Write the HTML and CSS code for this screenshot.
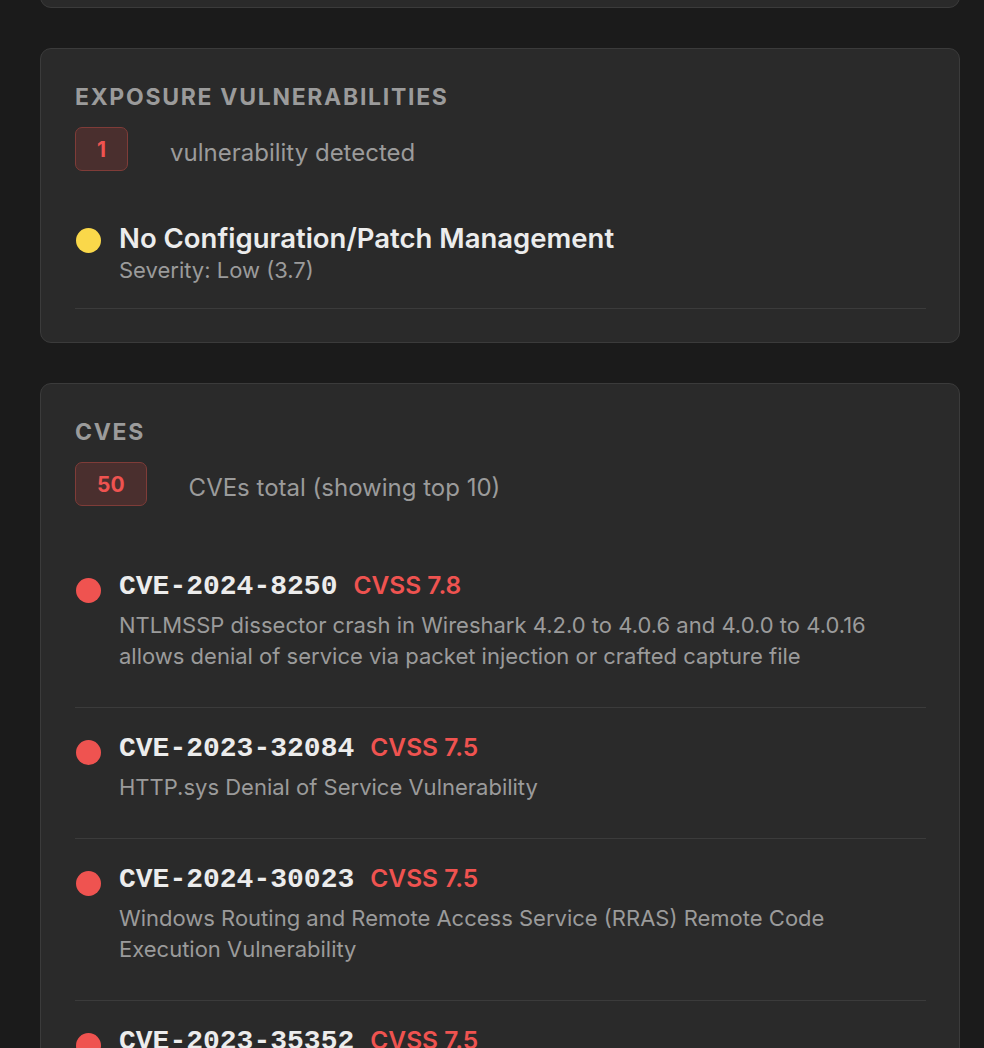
FILE: index.html
```html
<!DOCTYPE html>
<html lang="en">
<head>
<meta charset="utf-8">
<title>Vulnerabilities</title>
<link rel="stylesheet" href="styles.css">
</head>
<body>
<main class="page">
  <section class="card card-prev"></section>

  <section class="card">
    <h2 class="card-title">Exposure Vulnerabilities</h2>
    <div class="count-row">
      <span class="badge">1</span>
      <span class="count-text">vulnerability detected</span>
    </div>
    <ul class="list">
      <li class="item">
        <span class="dot dot-low"></span>
        <div class="item-body">
          <div class="item-title">No Configuration/Patch Management</div>
          <div class="item-sub">Severity: Low (3.7)</div>
        </div>
      </li>
    </ul>
  </section>

  <section class="card">
    <h2 class="card-title">CVEs</h2>
    <div class="count-row">
      <span class="badge">50</span>
      <span class="count-text">CVEs total (showing top 10)</span>
    </div>
    <ul class="list list-cve">
      <li class="item item-cve">
        <span class="dot dot-high"></span>
        <div class="item-body">
          <div class="cve-head"><span class="cve-id">CVE-2024-8250</span><span class="cvss">CVSS 7.8</span></div>
          <p class="cve-desc">NTLMSSP dissector crash in Wireshark 4.2.0 to 4.0.6 and 4.0.0 to 4.0.16 allows denial of service via packet injection or crafted capture file</p>
        </div>
      </li>
      <li class="item item-cve">
        <span class="dot dot-high"></span>
        <div class="item-body">
          <div class="cve-head"><span class="cve-id">CVE-2023-32084</span><span class="cvss">CVSS 7.5</span></div>
          <p class="cve-desc">HTTP.sys Denial of Service Vulnerability</p>
        </div>
      </li>
      <li class="item item-cve">
        <span class="dot dot-high"></span>
        <div class="item-body">
          <div class="cve-head"><span class="cve-id">CVE-2024-30023</span><span class="cvss">CVSS 7.5</span></div>
          <p class="cve-desc">Windows Routing and Remote Access Service (RRAS) Remote Code Execution Vulnerability</p>
        </div>
      </li>
      <li class="item item-cve">
        <span class="dot dot-high"></span>
        <div class="item-body">
          <div class="cve-head"><span class="cve-id">CVE-2023-35352</span><span class="cvss">CVSS 7.5</span></div>
          <p class="cve-desc">Windows Remote Desktop Security Feature Bypass Vulnerability</p>
        </div>
      </li>
    </ul>
  </section>
</main>
</body>
</html>
```

FILE: styles.css
```css
* { box-sizing: border-box; }

html, body {
  margin: 0;
  padding: 0;
  background: #1b1b1b;
  height: 100%;
  overflow: hidden;
}

body {
  font-family: Inter, "Noto Sans", "Liberation Sans", sans-serif;
  color: #e8e8e8;
}

.page {
  display: flex;
  flex-direction: column;
  gap: 40px;
  padding: 0 24px 0 40px;
}

.card {
  width: 920px;
  background: #2a2a2a;
  border: 1px solid #3b3b3b;
  border-radius: 11px;
  padding: 33px 33px 33px 34px;
}

.card-prev {
  height: 100px;
  margin-top: -92px;
  flex-shrink: 0;
}

.card-title {
  margin: 0;
  font-size: 23px;
  line-height: 30px;
  font-weight: 700;
  letter-spacing: 1.7px;
  text-transform: uppercase;
  color: #9b9b9b;
}

.count-row {
  display: flex;
  align-items: center;
  gap: 42px;
  margin-top: 15px;
}

.badge {
  display: inline-flex;
  align-items: center;
  justify-content: center;
  height: 44px;
  padding: 0 21px;
  background: #4a2f2e;
  border: 1.5px solid #7f3c38;
  border-radius: 7px;
  color: #ef5350;
  font-weight: 700;
  font-size: 21px;
}

.count-text {
  font-size: 24px;
  color: #9b9b9b;
  padding-top: 6px;
}

.list {
  list-style: none;
  margin: 28px 0 0;
  padding: 0;
}

.list-cve {
  margin-top: 40px;
}

.item {
  display: flex;
  align-items: flex-start;
  gap: 18px;
  padding: 24px 0;
  border-bottom: 1px solid #3b3b3b;
}

.item-cve:last-child {
  border-bottom: none;
}

.dot {
  flex: 0 0 25px;
  width: 25px;
  height: 25px;
  border-radius: 50%;
  margin-top: 5px;
  margin-left: 1px;
}

.item-cve .dot {
  margin-top: 8px;
}

.dot-low { background: #fad84a; }
.dot-high { background: #ef5350; }

.item-body {
  flex: 1;
  min-width: 0;
}

.item-title {
  font-size: 27.5px;
  line-height: 30px;
  font-weight: 600;
  color: #ececec;
}

.item-sub {
  margin-top: 3px;
  font-size: 22px;
  line-height: 28px;
  color: #9b9b9b;
}

.cve-head {
  display: flex;
  align-items: baseline;
  gap: 16px;
  line-height: 30px;
}

.cve-id {
  font-family: "Liberation Mono", "Courier New", monospace;
  font-weight: 700;
  font-size: 28px;
  color: #ececec;
}

.cvss {
  font-size: 24.5px;
  font-weight: 600;
  color: #ef5350;
}

.cve-desc {
  margin: 8px 0 11px;
  font-size: 22px;
  line-height: 31px;
  color: #9b9b9b;
}
```
